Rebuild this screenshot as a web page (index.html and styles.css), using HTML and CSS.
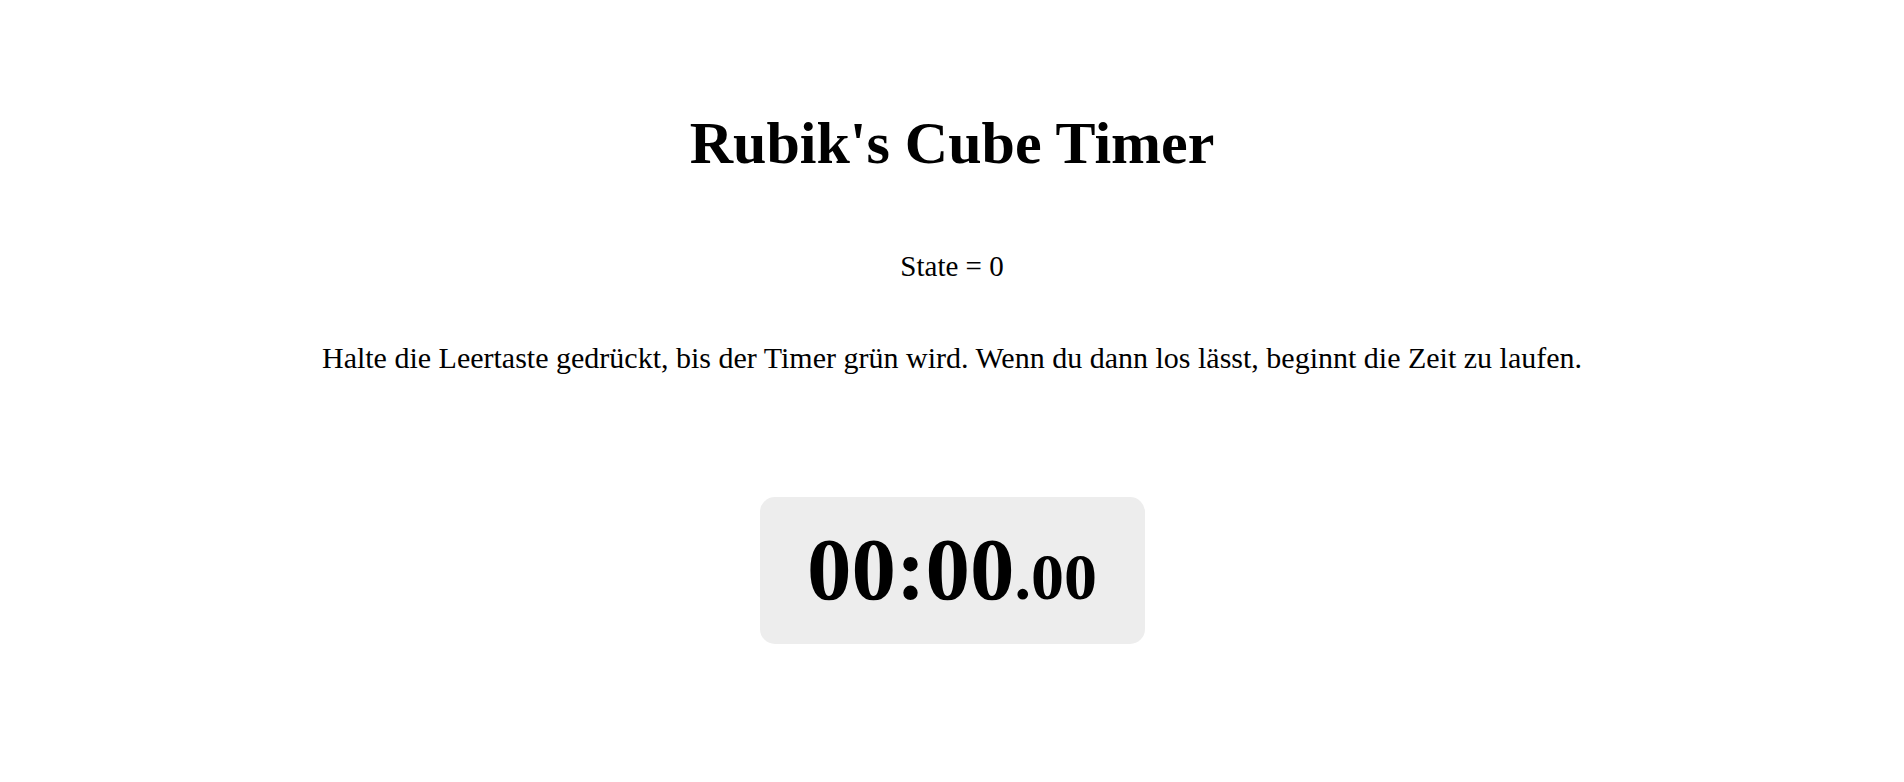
FILE: index.html
```html
<!DOCTYPE html>
<html lang="de">
<head>
<meta charset="utf-8">
<title>Rubik's Cube Timer</title>
<link rel="stylesheet" href="styles.css">
</head>
<body>
<main class="page">
  <h1 class="title">Rubik's Cube Timer</h1>
  <p class="state">State = 0</p>
  <p class="hint">Halte die Leertaste gedrückt, bis der Timer grün wird. Wenn du dann los lässt, beginnt die Zeit zu laufen.</p>
  <div class="timer"><span class="main">00:00</span><span class="ms">.00</span></div>
</main>
</body>
</html>
```
FILE: styles.css
```css
html, body {
  margin: 0;
  padding: 0;
  background: #ffffff;
  color: #000000;
  font-family: "Liberation Serif", "Times New Roman", serif;
}
.page {
  display: flex;
  flex-direction: column;
  align-items: center;
  padding-top: 113px;
}
.title {
  margin: 0;
  font-size: 60px;
  font-weight: bold;
  line-height: 1;
}
.state {
  margin: 79px 0 0;
  font-size: 29px;
  line-height: 1;
}
.hint {
  margin: 62px 0 0;
  font-size: 30px;
  line-height: 1;
}
.timer {
  margin-top: 124px;
  box-sizing: border-box;
  background: #ededed;
  border-radius: 15px;
  width: 385px;
  height: 147px;
  padding-top: 28px;
  text-align: center;
  font-weight: bold;
  line-height: 1;
}
.main { font-size: 89px; }
.ms { font-size: 66px; }
```
